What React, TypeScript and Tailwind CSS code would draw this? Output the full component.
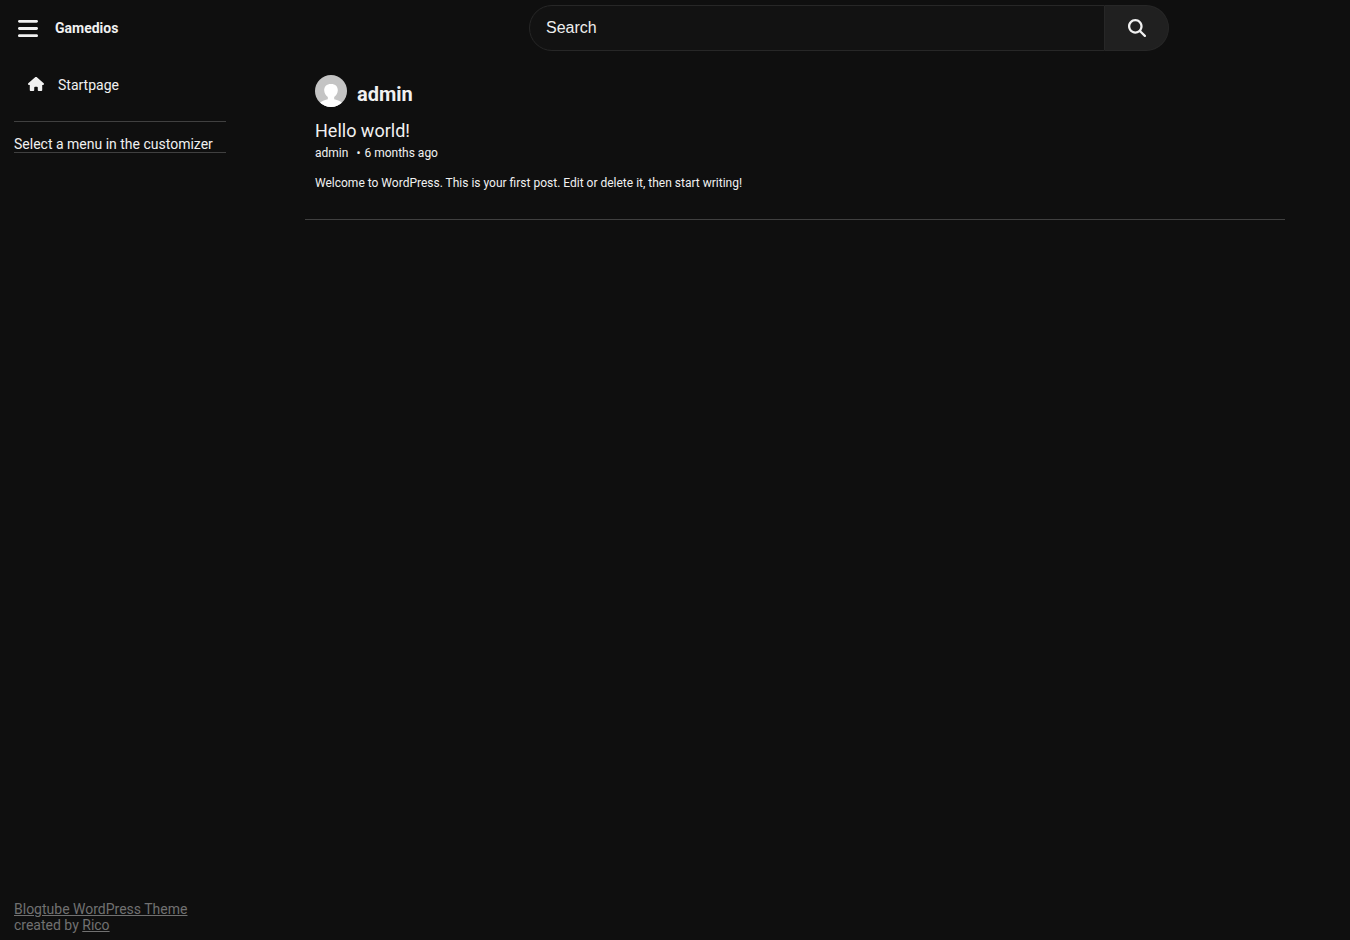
import { FaBars, FaHouse, FaMagnifyingGlass } from "react-icons/fa6";

const POSTS = [
  {
    id: 1,
    title: "Hello world!",
    author: "admin",
    date: "6 months ago",
    excerpt: "Welcome to WordPress. This is your first post. Edit or delete it, then start writing!",
  },
];

function Avatar() {
  return (
    <svg viewBox="0 0 32 32" className="w-8 h-8 rounded-full" aria-hidden="true">
      <rect width="32" height="32" fill="#c4c4c4" />
      <path
        d="M16 9c-4.500 0-7 2.600-6.800 6.600.2 3 1.600 5 3.600 6.400v2.200C9 25 6.500 26 5 28v4h22v-4c-1.500-2-4-3-7.800-3.800V22c2-1.400 3.400-3.400 3.600-6.400C23 11.600 20.500 9 16 9z"
        fill="#fff"
      />
    </svg>
  );
}

function Header() {
  return (
    <header className="flex items-center h-14">
      <div className="flex items-center w-[348px] shrink-0 pl-[18px]">
        <button type="button" aria-label="Toggle menu" className="w-5">
          <FaBars className="w-5 h-[23px]" />
        </button>
        <a href="#" className="ml-[17px] font-bold">Gamedios</a>
      </div>
      <div className="flex flex-1 justify-center">
        <form className="flex w-full max-w-[640px] h-[46px]">
          <input
            type="text"
            aria-label="Search"
            placeholder="Search"
            className="flex-1 min-w-0 px-4 rounded-l-full border border-[#272727] bg-[#121212] font-['Liberation_Sans',Arial,sans-serif] text-base placeholder:text-[#eeeeee] outline-none"
          />
          <button
            type="submit"
            aria-label="Submit search"
            className="flex items-center justify-center w-16 rounded-r-full border border-l-0 border-[#272727] bg-[#202020]"
          >
            <FaMagnifyingGlass className="w-[18px] h-[18px]" />
          </button>
        </form>
      </div>
    </header>
  );
}

function Sidebar() {
  return (
    <aside className="flex flex-col w-60 shrink-0 px-[14px] pb-[7px] leading-4">
      <nav>
        <a href="#" className="flex items-center h-10 mt-[9px] pl-[14px]">
          <FaHouse className="w-4 h-4 mb-[2px]" />
          <span className="ml-[14px]">Startpage</span>
        </a>
        <div className="mt-4 pt-[14px] border-y border-[#404040]">Select a menu in the customizer</div>
      </nav>
      <footer className="mt-auto text-[#717171]">
        <a href="#" className="underline">Blogtube WordPress Theme</a>
        <br />
        created by <a href="#" className="underline">Rico</a>
      </footer>
    </aside>
  );
}

export default function App() {
  return (
    <div className="flex flex-col min-h-screen bg-[#0f0f0f] text-[#f1f1f1] text-sm font-[Roboto,sans-serif]">
      <Header />
      <div className="flex flex-1">
        <Sidebar />
        <main className="flex-1 px-[65px] pt-[19px]">
          <div className="flex items-center px-[10px]">
            <Avatar />
            <h1 className="ml-[10px] pt-[6px] text-xl leading-[26px] font-bold">admin</h1>
          </div>
          {POSTS.map((post) => (
            <article key={post.id} className="px-[10px] pt-3 pb-[26px] border-b border-[#404040] text-xs">
              <h2 className="text-lg leading-6">
                <a href="#">{post.title}</a>
              </h2>
              <div className="flex leading-5">
                <a href="#">{post.author}</a>
                <span className="ml-2 mr-1">•</span>
                <span>{post.date}</span>
              </div>
              <p className="mt-[10px] leading-5">{post.excerpt}</p>
            </article>
          ))}
        </main>
      </div>
    </div>
  );
}
